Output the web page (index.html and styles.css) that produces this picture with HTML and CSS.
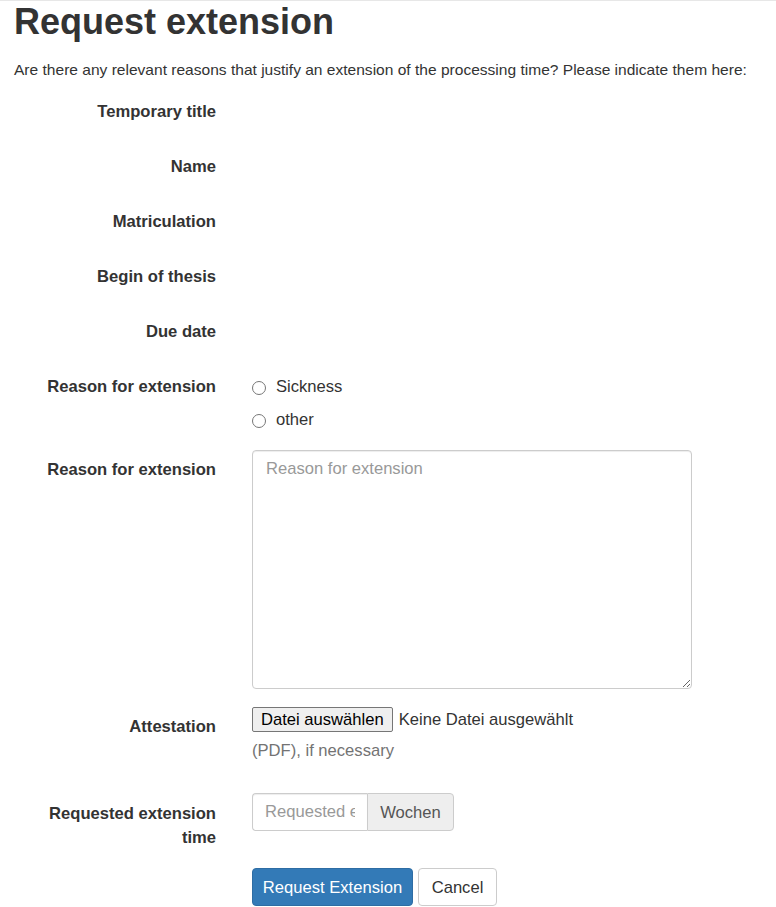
FILE: index.html
```html
<!DOCTYPE html>
<html lang="en">
<head>
<meta charset="utf-8">
<title>Request extension</title>
<link rel="stylesheet" href="styles.css">
</head>
<body>
<div class="topline"></div>
<main class="page">
  <h1 class="title">Request extension</h1>
  <p class="intro">Are there any relevant reasons that justify an extension of the processing time? Please indicate them here:</p>
  <form class="form">
    <div class="row row-static"><label class="label">Temporary title</label><div class="field"></div></div>
    <div class="row row-static"><label class="label">Name</label><div class="field"></div></div>
    <div class="row row-static"><label class="label">Matriculation</label><div class="field"></div></div>
    <div class="row row-static"><label class="label">Begin of thesis</label><div class="field"></div></div>
    <div class="row row-static"><label class="label">Due date</label><div class="field"></div></div>
    <div class="row row-radios">
      <label class="label">Reason for extension</label>
      <div class="field radios">
        <label class="radio"><input type="radio" name="reason" class="radio-input"><span>Sickness</span></label>
        <label class="radio"><input type="radio" name="reason" class="radio-input"><span>other</span></label>
      </div>
    </div>
    <div class="row row-text">
      <label class="label label-text">Reason for extension</label>
      <div class="field"><textarea class="textarea" placeholder="Reason for extension"></textarea></div>
    </div>
    <div class="row row-file">
      <label class="label label-file">Attestation</label>
      <div class="field">
        <div class="file"><button type="button" class="file-btn">Datei auswählen</button><span class="file-name">Keine Datei ausgewählt</span></div>
        <div class="help">(PDF), if necessary</div>
      </div>
    </div>
    <div class="row row-time">
      <label class="label label-time">Requested extension time</label>
      <div class="field">
        <div class="input-group"><input type="text" class="input" placeholder="Requested extension time"><span class="addon">Wochen</span></div>
      </div>
    </div>
    <div class="row row-actions">
      <div></div>
      <div class="field actions">
        <button type="button" class="btn btn-primary">Request Extension</button>
        <button type="button" class="btn btn-default">Cancel</button>
      </div>
    </div>
  </form>
</main>
</body>
</html>
```
FILE: styles.css
```css
html, body {
  margin: 0;
  background: #fff;
}
body {
  font-family: "Liberation Sans", Arial, Helvetica, sans-serif;
  font-size: 16.6px;
  line-height: 24px;
  color: #333;
}
.topline {
  height: 1px;
  background: #e7e7e7;
}
.page {
  padding: 0 14px;
}
.title {
  font-size: 36px;
  font-weight: 700;
  line-height: 40px;
  margin: 1px 0 0;
}
.intro {
  font-size: 15.55px;
  white-space: nowrap;
  margin: 16px 0 9px;
}
.form {
  margin: 0;
}
.row {
  display: grid;
  grid-template-columns: 202px 440px;
  column-gap: 36px;
  margin-bottom: 15px;
}
.label {
  text-align: right;
  font-weight: 700;
  padding-top: 9px;
}
.row-static {
  min-height: 40px;
}
.radios {
  display: flex;
  flex-direction: column;
  padding-bottom: 3px;
}
.radio {
  display: flex;
  align-items: flex-start;
  height: 33px;
  padding-top: 9px;
  box-sizing: border-box;
}
.radio-input {
  margin: 6px 10px 0 0;
  width: 14px;
  height: 14px;
}
.label-text {
  padding-top: 8px;
}
.row-text {
  margin-bottom: 18px;
}
.textarea {
  display: block;
  box-sizing: border-box;
  width: 440px;
  height: 239px;
  margin: 0;
  padding: 6px 13px;
  border: 1px solid #ccc;
  border-radius: 4px;
  box-shadow: inset 0 1px 1px rgba(0,0,0,.075);
  font: inherit;
  color: #555;
  resize: both;
}
.textarea::placeholder,
.input::placeholder {
  color: #999;
}
.file {
  display: flex;
  align-items: center;
  height: 25px;
}
.file-btn {
  font: inherit;
  line-height: 21px;
  height: 25px;
  padding: 0 8px;
  margin: 0 6px 0 0;
  color: #000;
  background: #efefef;
  border: 1px solid #767676;
  border-radius: 2px;
  white-space: nowrap;
}
.file-name {
  color: #333;
  white-space: nowrap;
}
.help {
  margin-top: 7px;
  color: #737373;
}
.label-file {
  padding-top: 8px;
}
.row-file {
  margin-bottom: 30px;
}
.row-time {
  margin-bottom: 18px;
}
.label-time {
  padding-top: 9px;
}
.input-group {
  display: flex;
  width: 202px;
  height: 38px;
}
.input {
  box-sizing: border-box;
  width: 115px;
  height: 38px;
  margin: 0;
  padding: 6px 12px;
  font: inherit;
  color: #555;
  border: 1px solid #ccc;
  border-right: 0;
  border-radius: 4px 0 0 4px;
  box-shadow: inset 0 1px 1px rgba(0,0,0,.075);
  background: #fff;
}
.addon {
  box-sizing: border-box;
  flex: 1;
  display: flex;
  align-items: center;
  justify-content: center;
  padding-top: 2px;
  color: #555;
  background: #eee;
  border: 1px solid #ccc;
  border-radius: 0 4px 4px 0;
}
.actions {
  display: flex;
  gap: 5px;
}
.btn {
  box-sizing: border-box;
  height: 38px;
  padding: 7px 0 5px;
  font: inherit;
  border: 1px solid transparent;
  border-radius: 4px;
  white-space: nowrap;
  text-align: center;
  cursor: pointer;
}
.btn-primary {
  width: 161px;
  color: #fff;
  background: #337ab7;
  border-color: #2e6da4;
}
.btn-default {
  width: 79px;
  color: #333;
  background: #fff;
  border-color: #ccc;
}
.row-actions {
  margin-bottom: 0;
}
```
